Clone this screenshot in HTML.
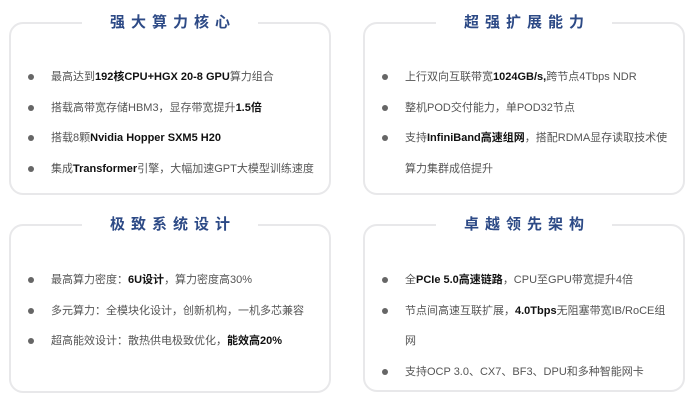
<!DOCTYPE html>
<html><head><meta charset="utf-8"><style>
body{margin:0;width:698px;height:412px;background:#fff;font-family:"Liberation Sans","Noto Sans CJK SC",sans-serif;position:relative;overflow:hidden}
.box{position:absolute;border:2px solid #e8e8ea;border-radius:14px;box-sizing:border-box}
.t{position:absolute;top:-13px;left:0;right:0;text-align:center}
.t span{background:#fff;padding:0 22px 0 28px;font-size:15px;font-weight:bold;color:#2d4a86;letter-spacing:6px;line-height:24px}
ul{list-style:none;margin:0;padding:0;position:absolute;left:16px;right:10px}
li{position:relative;padding-left:24px;font-size:11px;color:#555;line-height:30.5px}
li:before{content:"";position:absolute;left:1px;top:12px;width:6px;height:6px;border-radius:50%;background:#666}
b{color:#111}
</style></head><body>
<div class="box" style="left:9px;top:22px;width:322px;height:173px"><div class="t"><span>强大算力核心</span></div>
<ul style="top:38px"><li>最高达到<b>192核CPU+HGX 20-8 GPU</b>算力组合</li><li>搭载高带宽存储HBM3，显存带宽提升<b>1.5倍</b></li><li>搭载8颗<b>Nvidia Hopper SXM5 H20</b></li><li>集成<b>Transformer</b>引擎，大幅加速GPT大模型训练速度</li></ul></div>
<div class="box" style="left:363px;top:22px;width:322px;height:173px"><div class="t"><span>超强扩展能力</span></div>
<ul style="top:38px"><li>上行双向互联带宽<b>1024GB/s,</b>跨节点4Tbps NDR</li><li>整机POD交付能力，单POD32节点</li><li>支持<b>InfiniBand高速组网</b>，搭配RDMA显存读取技术使算力集群成倍提升</li></ul></div>
<div class="box" style="left:9px;top:224px;width:322px;height:169px"><div class="t"><span>极致系统设计</span></div>
<ul style="top:39px"><li>最高算力密度：<b>6U设计</b>，算力密度高30%</li><li>多元算力：全模块化设计，创新机构，一机多芯兼容</li><li>超高能效设计：散热供电极致优化，<b>能效高20%</b></li></ul></div>
<div class="box" style="left:363px;top:224px;width:322px;height:168px"><div class="t"><span>卓越领先架构</span></div>
<ul style="top:39px"><li>全<b>PCIe 5.0高速链路</b>，CPU至GPU带宽提升4倍</li><li>节点间高速互联扩展，<b>4.0Tbps</b>无阻塞带宽IB/RoCE组网</li><li>支持OCP 3.0、CX7、BF3、DPU和多种智能网卡</li></ul></div>
</body></html>
